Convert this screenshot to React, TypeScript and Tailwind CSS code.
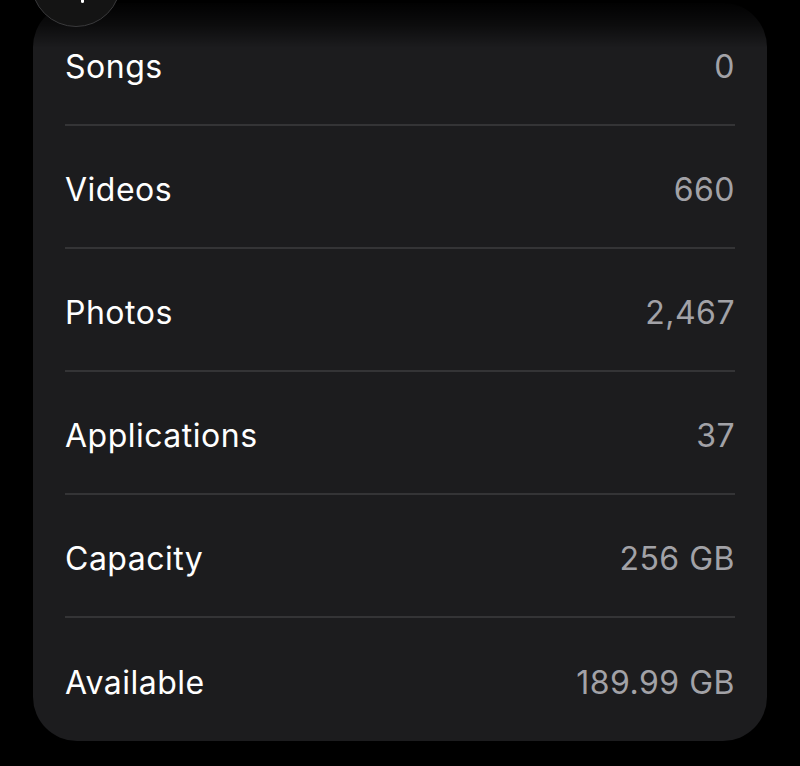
const ROWS = [
  { label: 'Songs', value: '0' },
  { label: 'Videos', value: '660' },
  { label: 'Photos', value: '2,467' },
  { label: 'Applications', value: '37' },
  { label: 'Capacity', value: '256 GB' },
  { label: 'Available', value: '189.99 GB' },
] as const

export default function App() {
  return (
    <div
      className="relative h-[766px] w-[800px] overflow-hidden bg-black"
      style={{ fontFamily: 'Inter, "Noto Sans", sans-serif' }}
    >
      <div className="mx-[33px] mt-[3px] overflow-hidden rounded-[44px] bg-[#1c1c1e]">
        {ROWS.map((row, i) => (
          <div key={row.label} className="px-[32px]">
            <div
              className={
                'flex h-[123px] items-center justify-between pt-[6px] ' +
                (i < ROWS.length - 1 ? 'border-b-2 border-[#343436]' : '')
              }
            >
              <span className="text-[32px] tracking-[0.5px] text-white">{row.label}</span>
              <span className="text-[32px] tracking-[0.5px] text-[#a2a2a7]">{row.value}</span>
            </div>
          </div>
        ))}
      </div>

      {/* top fade behind the nav bar */}
      <div className="pointer-events-none absolute inset-x-0 top-0 h-[48px] bg-gradient-to-b from-black via-black/60 to-transparent" />

      {/* back button, mostly scrolled off */}
      <div className="absolute left-[31px] top-[-63px] flex h-[90px] w-[90px] items-end justify-center rounded-full border-[1.5px] border-[#3a3a3c] bg-[#141414]">
        <div className="mb-[23px] ml-[12px] h-[5px] w-[3px] rounded-full bg-white" />
      </div>
    </div>
  )
}
